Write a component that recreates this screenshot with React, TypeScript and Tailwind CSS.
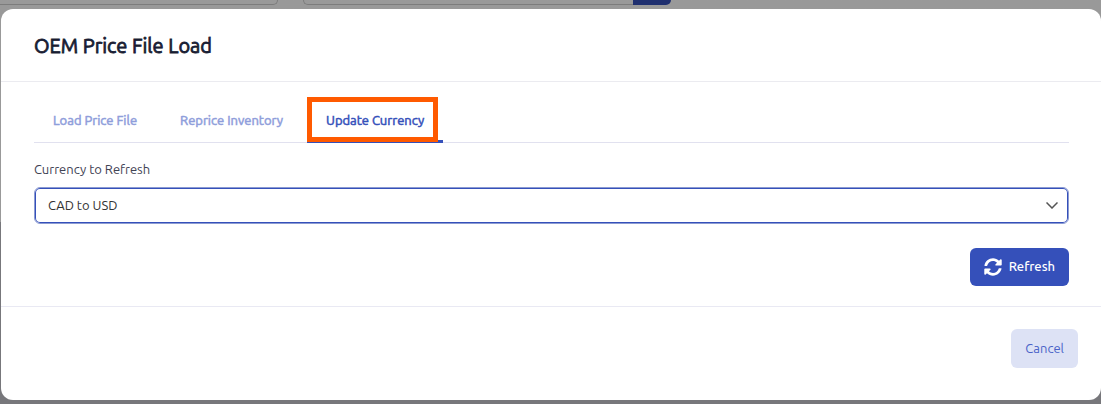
import clsx from 'clsx';
import { FaSyncAlt } from 'react-icons/fa';

const TABS = ['Load Price File', 'Reprice Inventory', 'Update Currency'];

function PageBehind() {
  return (
    <div aria-hidden="true" className="flex h-[5px] gap-[25px]">
      <div className="w-[278px] rounded-br-md border-r border-b border-[#7c7c7c]" />
      <div className="flex w-[368px]">
        <div className="flex-1 rounded-bl-md border-b border-l border-[#7c7c7c]" />
        <div className="w-[38px] rounded-br-md bg-[#1f2f6f]" />
      </div>
    </div>
  );
}

function Tabs({ active }: { active: string }) {
  return (
    <div role="tablist" className="flex gap-[5px] border-b border-[#e1e1ef]">
      {TABS.map((tab) => {
        const selected = tab === active;
        return (
          <button
            key={tab}
            type="button"
            role="tab"
            aria-selected={selected}
            className={clsx(
              'relative -mb-px h-[46px] border-b-3 px-[19px] pt-1 text-[13px] [-webkit-text-stroke:0.04em]',
              selected ? 'border-[#3550ba] text-[#3550ba]' : 'border-transparent text-[#8f9edb]',
            )}
          >
            {tab}
            {selected && <span className="absolute top-0 right-[5px] -bottom-[2px] left-0 border-5 border-[#ff5a00]" />}
          </button>
        );
      })}
    </div>
  );
}

export default function App() {
  return (
    <div className="min-h-screen bg-linear-to-b from-[#999999] from-55% to-[#77777b] to-55% pb-1 font-['Ubuntu','Noto_Sans',sans-serif] text-[13px]">
      <PageBehind />
      <div role="dialog" aria-labelledby="dialog-title" className="mt-1 ml-px rounded-xl bg-white">
        <header className="flex h-[73px] items-center border-b border-[#ebebf0] pt-[2px] pr-8 pl-[33px]">
          <h1 id="dialog-title" className="text-[20px] leading-6 text-[#181c32] [-webkit-text-stroke:0.04em]">OEM Price File Load</h1>
        </header>

        <div className="pt-[15px] pr-8 pb-5 pl-[33px]">
          <Tabs active="Update Currency" />
          <label htmlFor="currency" className="mt-4 block leading-5 text-[#3f4254]">Currency to Refresh</label>
          <div className="relative mt-2">
            <select
              id="currency"
              className="block h-[37px] w-full appearance-none rounded-md border border-[#8c9bd2] bg-white px-[13px] text-[#333333] ring-1 ring-[#3550ba] ring-inset outline-none"
            >
              <option>CAD to USD</option>
            </select>
            <svg viewBox="0 0 12 7" className="pointer-events-none absolute top-[15px] right-[11px] h-[7px] w-3" fill="none" stroke="#555555" strokeWidth="1.5">
              <path d="M.5.5 6 6 11.500.5" />
            </svg>
          </div>
          <div className="mt-6 flex justify-end">
            <button type="button" className="flex h-[38px] items-center gap-[7px] rounded-md bg-[#3550ba] px-[14px] font-medium text-white">
              <FaSyncAlt className="size-[18px]" />
              Refresh
            </button>
          </div>
        </div>

        <footer className="flex justify-end border-t border-[#e9e9f3] pt-[22px] pr-[23px] pb-8">
          <button type="button" className="h-[39px] rounded-md bg-[#dde2f5] px-[14px] text-[#4a62c8]">
            Cancel
          </button>
        </footer>
      </div>
    </div>
  );
}
